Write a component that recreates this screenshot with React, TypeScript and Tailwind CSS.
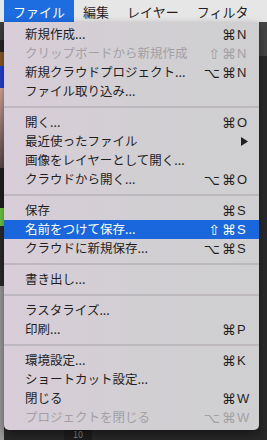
import React from "react";

// macOS-style "File" menu dropdown, Japanese UI

type Item =
  | { kind: "sep" }
  | {
      kind: "item";
      label: string;
      mods?: string[];
      keyChar?: string;
      submenu?: boolean;
      disabled?: boolean;
      active?: boolean;
    };

const ITEMS: Item[] = [
  { kind: "item", label: "新規作成...", mods: ["⌘"], keyChar: "N" },
  { kind: "item", label: "クリップボードから新規作成", mods: ["⇧", "⌘"], keyChar: "N", disabled: true },
  { kind: "item", label: "新規クラウドプロジェクト...", mods: ["⌥", "⌘"], keyChar: "N" },
  { kind: "item", label: "ファイル取り込み..." },
  { kind: "sep" },
  { kind: "item", label: "開く...", mods: ["⌘"], keyChar: "O" },
  { kind: "item", label: "最近使ったファイル", submenu: true },
  { kind: "item", label: "画像をレイヤーとして開く..." },
  { kind: "item", label: "クラウドから開く...", mods: ["⌥", "⌘"], keyChar: "O" },
  { kind: "sep" },
  { kind: "item", label: "保存", mods: ["⌘"], keyChar: "S" },
  { kind: "item", label: "名前をつけて保存...", mods: ["⇧", "⌘"], keyChar: "S", active: true },
  { kind: "item", label: "クラウドに新規保存...", mods: ["⌥", "⌘"], keyChar: "S" },
  { kind: "sep" },
  { kind: "item", label: "書き出し..." },
  { kind: "sep" },
  { kind: "item", label: "ラスタライズ..." },
  { kind: "item", label: "印刷...", mods: ["⌘"], keyChar: "P" },
  { kind: "sep" },
  { kind: "item", label: "環境設定...", mods: ["⌘"], keyChar: "K" },
  { kind: "item", label: "ショートカット設定..." },
  { kind: "item", label: "閉じる", mods: ["⌘"], keyChar: "W" },
  { kind: "item", label: "プロジェクトを閉じる", mods: ["⌥", "⌘"], keyChar: "W", disabled: true },
];

const MENUBAR = ["ファイル", "編集", "レイヤー", "フィルタ"];

function MenuRow({ item }: { item: Extract<Item, { kind: "item" }> }) {
  const color = item.active
    ? "bg-[#1a67dd] text-white"
    : item.disabled
    ? "text-[#a2a0a3]"
    : "text-[#1f1f1f]";
  return (
    <div className={`flex h-[19px] items-center pl-[21px] pr-[5px] ${color}`}>
      <span className="flex-1 whitespace-nowrap text-[12.5px] leading-none">{item.label}</span>
      {item.mods && (
        <span className="flex items-center gap-[2px] font-['DejaVu_Sans',sans-serif] text-[14px] leading-none">
          {item.mods.map((m, i) => (
            <span key={i}>{m}</span>
          ))}
        </span>
      )}
      {(item.keyChar || item.submenu) && (
        <span className="ml-[1px] flex w-[17px] items-center font-['Liberation_Sans','DejaVu_Sans',sans-serif] text-[13px] leading-none">
          {item.keyChar}
          {item.submenu && (
            <svg width="7" height="9" viewBox="0 0 7 9" className="ml-[4px]">
              <path d="M0 0 L7 4.5 L0 9 Z" fill="#1f1f1f" />
            </svg>
          )}
        </span>
      )}
    </div>
  );
}

export default function App() {
  return (
    <div className="relative h-[440px] w-[267px] overflow-hidden bg-[#282828] font-['Noto_Sans_CJK_JP','Noto_Sans',sans-serif]">
      {/* Menu bar */}
      <div className="flex h-[22px] items-center bg-[#e6e6e6] pl-[4px] text-[13px] text-[#1f1f1f]">
        {MENUBAR.map((m, i) => (
          <div
            key={m}
            className={`flex h-full items-center px-[9px] leading-none ${i === 0 ? "bg-[#1d6ce0] text-white" : ""}`}
          >
            {m}
          </div>
        ))}
      </div>

      {/* App content behind the menu */}
      <div className="flex h-[418px]">
        <div className="flex w-[4px] flex-col">
          <div className="h-[18px] bg-[#3d3d3d]" />
          <div className="h-[12px] bg-[#262626]" />
          <div className="h-[14px] bg-[#8a5a2a]" />
          <div className="h-[22px] bg-[#2140d8]" />
          <div className="h-[80px] bg-gradient-to-b from-[#d9a9a0] to-[#5a4a4a]" />
          <div className="h-[40px] bg-[#202020]" />
          <div className="h-[18px] bg-[#6dcc3c]" />
          <div className="h-[60px] bg-[#2a2a2a]" />
          <div className="flex-1 bg-[#9a9a9a]" />
        </div>
        <div className="flex flex-1 flex-col">
          <div className="h-[34px] bg-[#454545]" />
          <div className="flex-1 bg-[#2a2a2a]" />
          <div className="flex h-[12px] items-end pl-[60px]">
            <div className="h-[10px] w-[28px] bg-[#1e1e1e] text-center text-[9px] leading-none text-[#888]">10</div>
          </div>
        </div>
      </div>

      {/* Dropdown */}
      <div className="absolute left-[4px] top-[22px] w-[255px] rounded-b-[5px] bg-gradient-to-r from-[#d8cdd8] via-[#d2cfd3] to-[#cfcfd1] pb-[3px] pt-[3px] shadow-[0_4px_10px_rgba(0,0,0,0.45)]">
        {ITEMS.map((it, i) =>
          it.kind === "sep" ? (
            <div key={i} className="flex h-[12px] items-center">
              <div className="h-[2px] w-full bg-[#bdb8bd]" />
            </div>
          ) : (
            <MenuRow key={i} item={it} />
          )
        )}
      </div>
    </div>
  );
}
